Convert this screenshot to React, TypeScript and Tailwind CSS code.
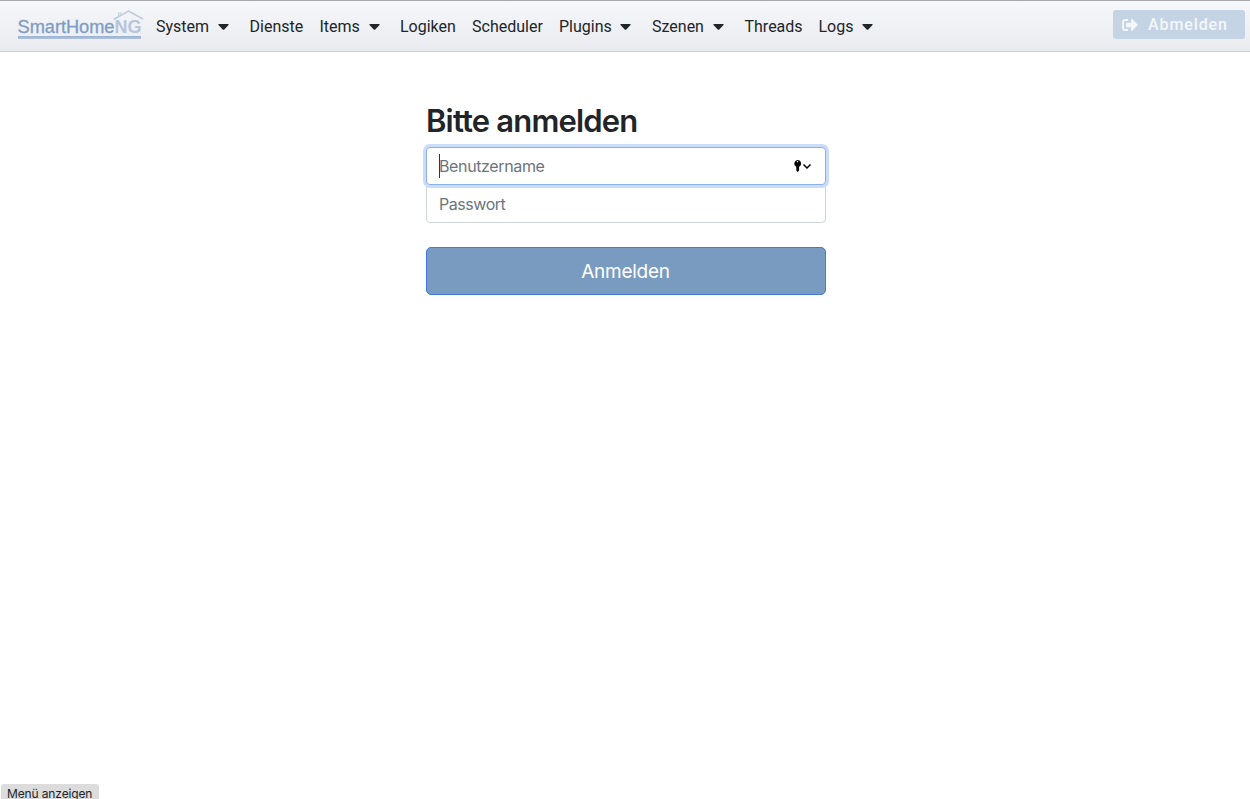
import { FaSignOutAlt } from "react-icons/fa";

type Item = { label: string; width: string; menu?: boolean };

const items: Item[] = [
  { label: "System", width: "w-[93.5px]", menu: true },
  { label: "Dienste", width: "w-[70px]" },
  { label: "Items", width: "w-[80.5px]", menu: true },
  { label: "Logiken", width: "w-[72px]" },
  { label: "Scheduler", width: "w-[87px]" },
  { label: "Plugins", width: "w-[93px]", menu: true },
  { label: "Szenen", width: "w-[92.5px]", menu: true },
  { label: "Threads", width: "w-[74px]" },
  { label: "Logs", width: "w-[71px]", menu: true },
];

function Logo() {
  return (
    <svg width="128" height="34" viewBox="0 0 128 34" className="shrink-0" aria-label="SmartHomeNG">
      <defs>
        <linearGradient id="bar" x1="0" y1="0" x2="0" y2="1">
          <stop offset="0" stopColor="#98b0d0" />
          <stop offset="1" stopColor="#b3c4da" />
        </linearGradient>
      </defs>
      <g fontFamily="Liberation Sans, Arial, sans-serif" fontSize="18.5">
        <text x=".5" y="26" textLength="97" lengthAdjust="spacingAndGlyphs" fill="#7d9cc6" stroke="#7d9cc6" strokeWidth="0.3">SmartHome</text>
        <text x="97.500" y="26" textLength="27" lengthAdjust="spacingAndGlyphs" fontWeight="700" fill="#b5c5da">NG</text>
      </g>
      <path d="M96.500 12.500 L111.500 4 L126 12" fill="none" stroke="#bccada" strokeWidth="1.5" />
      <path d="M101.500 9.500 V6 H104 V8" fill="none" stroke="#c4d0de" strokeWidth="1.2" />
      <rect x="1" y="29" width="123" height="3" fill="url(#bar)" />
    </svg>
  );
}

export default function App() {
  return (
    <div className="flex h-[799px] w-full flex-col overflow-hidden bg-white font-['Inter','Noto_Sans',sans-serif] text-[#212529]">
      <header className="flex h-[52px] shrink-0 items-start border-t border-b border-t-[#aaaaac] border-b-[#ceced0] bg-linear-to-b from-[#f6f7fa] to-[#eaebef] pr-[5px] pl-[17px]">
        <div className="mt-[6px] w-[139px]">
          <Logo />
        </div>
        <nav className="mt-[14px] flex font-['Roboto',sans-serif] text-base leading-6">
          {items.map((item) => (
            <a key={item.label} className={`flex shrink-0 items-center ${item.width}`}>
              <span>{item.label}</span>
              {item.menu && (
                <svg width="11" height="6" viewBox="0 0 11 6" className="ml-[8.7px]">
                  <path d="M.8 0H10.200Q11 .4 10.500 1L6.300 5.400Q5.500 6 4.700 5.400L.5 1Q0 .4 .8 0Z" fill="currentColor" />
                </svg>
              )}
            </a>
          ))}
        </nav>
        <button className="mt-[9px] ml-auto flex h-[29px] w-[132px] items-center rounded-[3px] bg-[#c5d4e4] pl-[9px] font-['Roboto',sans-serif] text-base font-medium tracking-[0.9px] text-[#f3f7fa]">
          <FaSignOutAlt className="mr-[10px] h-4 w-4" />
          Abmelden
        </button>
      </header>
      <main className="ml-[426px] w-[400px] flex-1 pt-[50px]">
        <h1 className="h-[45px] text-[31px] leading-[38px] font-semibold tracking-[-0.83px] [font-feature-settings:'calt'_0,'liga'_0]">Bitte anmelden</h1>
        <div className="relative z-10 flex h-[38px] items-center rounded-[4px] border border-[#8bb0ea] bg-white pr-[13px] pl-3 text-base tracking-[-0.37px] text-[#6c757d] shadow-[0_0_0_3px_#cadcf8]">
          <span className="-mr-px h-6 w-px bg-[#333]" />
          <span className="flex-1">Benutzername</span>
          <svg width="18" height="14" viewBox="0 0 18 14" className="text-black">
            <path fillRule="evenodd" d="M3.500 1a3.600 3.600 0 0 1 1.600 6.800V11.500L3.700 13L2.300 11.600V7.800A3.600 3.600 0 0 1 3.500 1ZM3.500 2a.7.7 0 1 0 .1 0Z" fill="currentColor" />
            <path d="M9.500 5.500L13 9L16.500 5.500" fill="none" stroke="currentColor" strokeWidth="1.500" />
          </svg>
        </div>
        <div className="flex h-[38px] items-center rounded-b-[4px] border border-[#ced4da] px-3 text-base tracking-[-0.45px] text-[#6c757d]">Passwort</div>
        <button className="mt-6 h-12 w-full rounded-[5px] border border-[#4478de] bg-[#7a9bc0] pt-[2px] pr-px text-[19px] tracking-[-0.25px] text-white">Anmelden</button>
      </main>
      <footer className="ml-px h-[15px] w-[98px] shrink-0 rounded-t-[3px] bg-[#dcdcdc] pl-[6px] text-xs leading-[20px] tracking-[-0.13px] whitespace-nowrap">Menü anzeigen</footer>
    </div>
  );
}
